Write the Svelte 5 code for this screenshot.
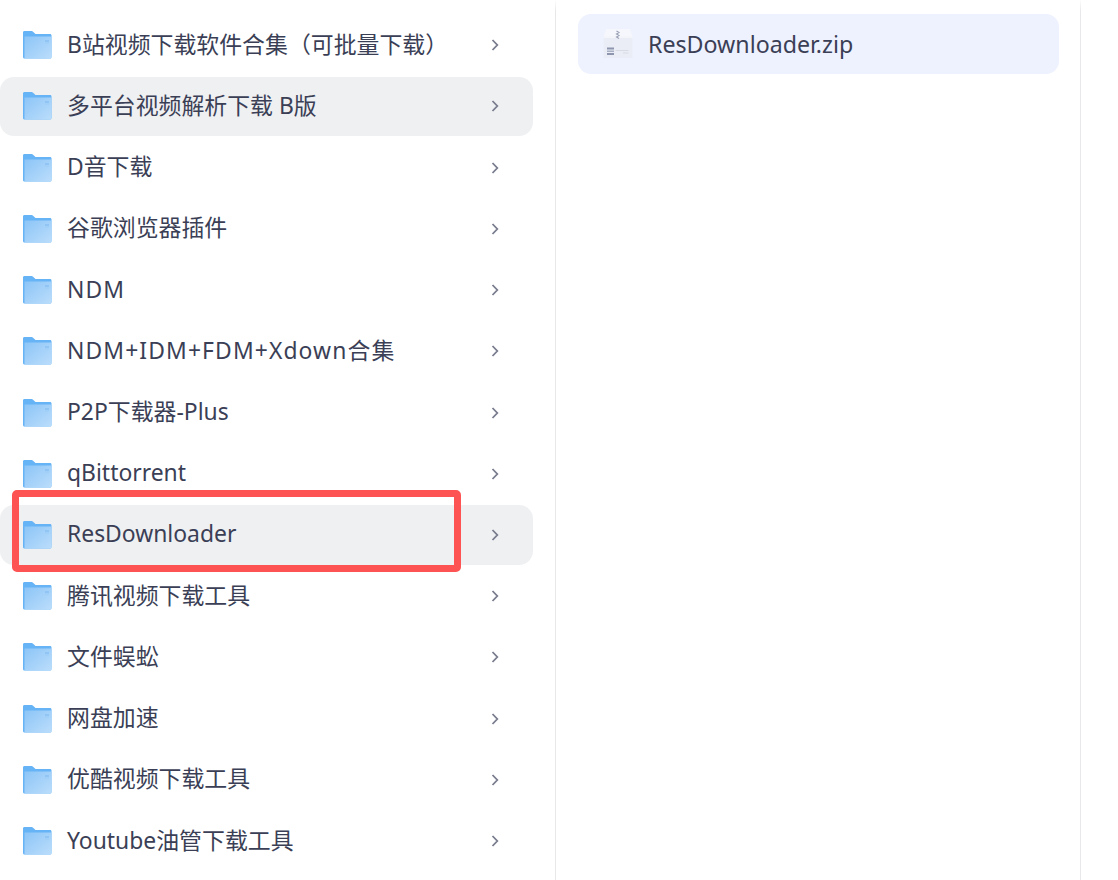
<script>
  const folders = [
    'B站视频下载软件合集（可批量下载）',
    '多平台视频解析下载 B版',
    'D音下载',
    '谷歌浏览器插件',
    'NDM',
    'NDM+IDM+FDM+Xdown合集',
    'P2P下载器-Plus',
    'qBittorrent',
    'ResDownloader',
    '腾讯视频下载工具',
    '文件蜈蚣',
    '网盘加速',
    '优酷视频下载工具',
    'Youtube油管下载工具',
  ]
  const active = [1, 8]
  const wide = [4, 5] // caps run wider in the original font
</script>

<svelte:head>
  <title>ResDownloader</title>
</svelte:head>

<main>
  <section class="folders">
    {#each folders as name, i}
      <div class="row" class:active={active.includes(i)}>
        <svg class="folder" width="30" height="28" viewBox="0 0 30 28">
          <defs>
            <linearGradient id="front{i}" x1="0" y1="0" x2="1" y2="1">
              <stop offset="0" stop-color="#8cc5f7" />
              <stop offset="1" stop-color="#bbddfb" />
            </linearGradient>
          </defs>
          <path d="M1 1.500C1 .7 1.600 0 2.400 0h7.200c.5 0 .9.2 1.200.5L13.500 3h14.600c.8 0 1.400.6 1.400 1.400V26c0 .8-.6 1.500-1.400 1.500H2.400C1.600 27.500 1 26.800 1 26z" fill="#66b3f5" />
          <path d="M2.500 5.500h27V26.500c0 .6-.5 1-1 1h-25c-.6 0-1-.4-1-1z" fill="url(#front{i})" />
          <rect x="23" y="9.500" width="4" height="1" fill="#7db8ef" />
          <rect x="23" y="11.500" width="4" height="1" fill="#9ccbf5" />
        </svg>
        <span class="name" class:wide={wide.includes(i)}>{name}</span>
        <svg class="chevron" width="8" height="12" viewBox="0 0 8 12">
          <path d="M1.500 1 6.300 6l-4.800 5" fill="none" stroke="#787c8e" stroke-width="1.800" />
        </svg>
      </div>
    {/each}
  </section>

  <section class="files">
    <div class="file">
      <svg class="zip" width="30" height="30" viewBox="0 0 30 30">
        <path d="M3 0h24l2.500 8H.5z" fill="#f5f7fc" />
        <rect x="0.500" y="7" width="29" height="22" rx="1" fill="#eaedf5" />
        <rect x="0.500" y="7" width="29" height="2" fill="#f3f5fa" />
        <path d="M13.500 2l2.500 1.500-2.500 1.500 2.500 1.500-2.500 1.500 2.500 1.500" fill="none" stroke="#9aa1b6" stroke-width="1.100" />
        <rect x="4" y="18.500" width="7" height="2" fill="#8d96ae" />
        <rect x="4" y="21.500" width="7" height="1.500" fill="#a7afc3" />
        <rect x="4" y="24" width="7" height="2" fill="#8d96ae" />
        <rect x="12.500" y="21" width="13" height="1" fill="#d8dbe5" />
        <rect x="20" y="23.500" width="5.500" height="1" fill="#d8dbe5" />
      </svg>
      <span class="name zipname">ResDownloader.zip</span>
    </div>
  </section>

  <div class="callout"></div>
</main>

<style>
  :global(body) {
    background: #fff;
    overflow: hidden;
  }

  main {
    position: relative;
    display: flex;
    width: 1118px;
    height: 880px;
    overflow: hidden;
    font-family: "Noto Sans", "Noto Sans CJK SC", sans-serif;
    color: #3b3f56;
  }

  .folders {
    box-sizing: border-box;
    flex: none;
    width: 556px;
    padding: 15.4px 22px 0 0;
    display: flex;
    flex-direction: column;
    gap: 1.63px;
    border-right: 1px solid #e8e8ea;
    border-image: linear-gradient(#fff, #e8e8ea 12px) 1;
  }

  .row {
    flex: none;
    height: 59.6px;
    display: flex;
    align-items: center;
    padding: 0 34px 0 22px;
    border-radius: 14px;
  }

  .row.active {
    background: #eff0f2;
  }

  .folder {
    flex: none;
    margin-right: 15px;
  }

  .name {
    font-size: 22.9px;
    line-height: 32px;
    padding-bottom: 1px;
    white-space: nowrap;
  }

  .name.wide {
    letter-spacing: 1.1px;
  }

  .name.zipname {
    font-size: 23.2px;
  }

  .chevron {
    flex: none;
    margin-left: auto;
  }

  .files {
    box-sizing: border-box;
    flex: none;
    width: 525px;
    padding: 14px 21px 0 22px;
    border-right: 1px solid #e8e8ea;
    border-image: linear-gradient(#fff, #e8e8ea 12px) 1;
  }

  .file {
    height: 60px;
    display: flex;
    align-items: center;
    padding-left: 25px;
    border-radius: 13px;
    background: #eef2fe;
  }

  .zip {
    flex: none;
    margin-right: 15px;
  }

  .callout {
    position: absolute;
    left: 12px;
    top: 490px;
    box-sizing: border-box;
    width: 449px;
    height: 82px;
    border: 7px solid #fe5353;
    border-radius: 5px;
  }
</style>
